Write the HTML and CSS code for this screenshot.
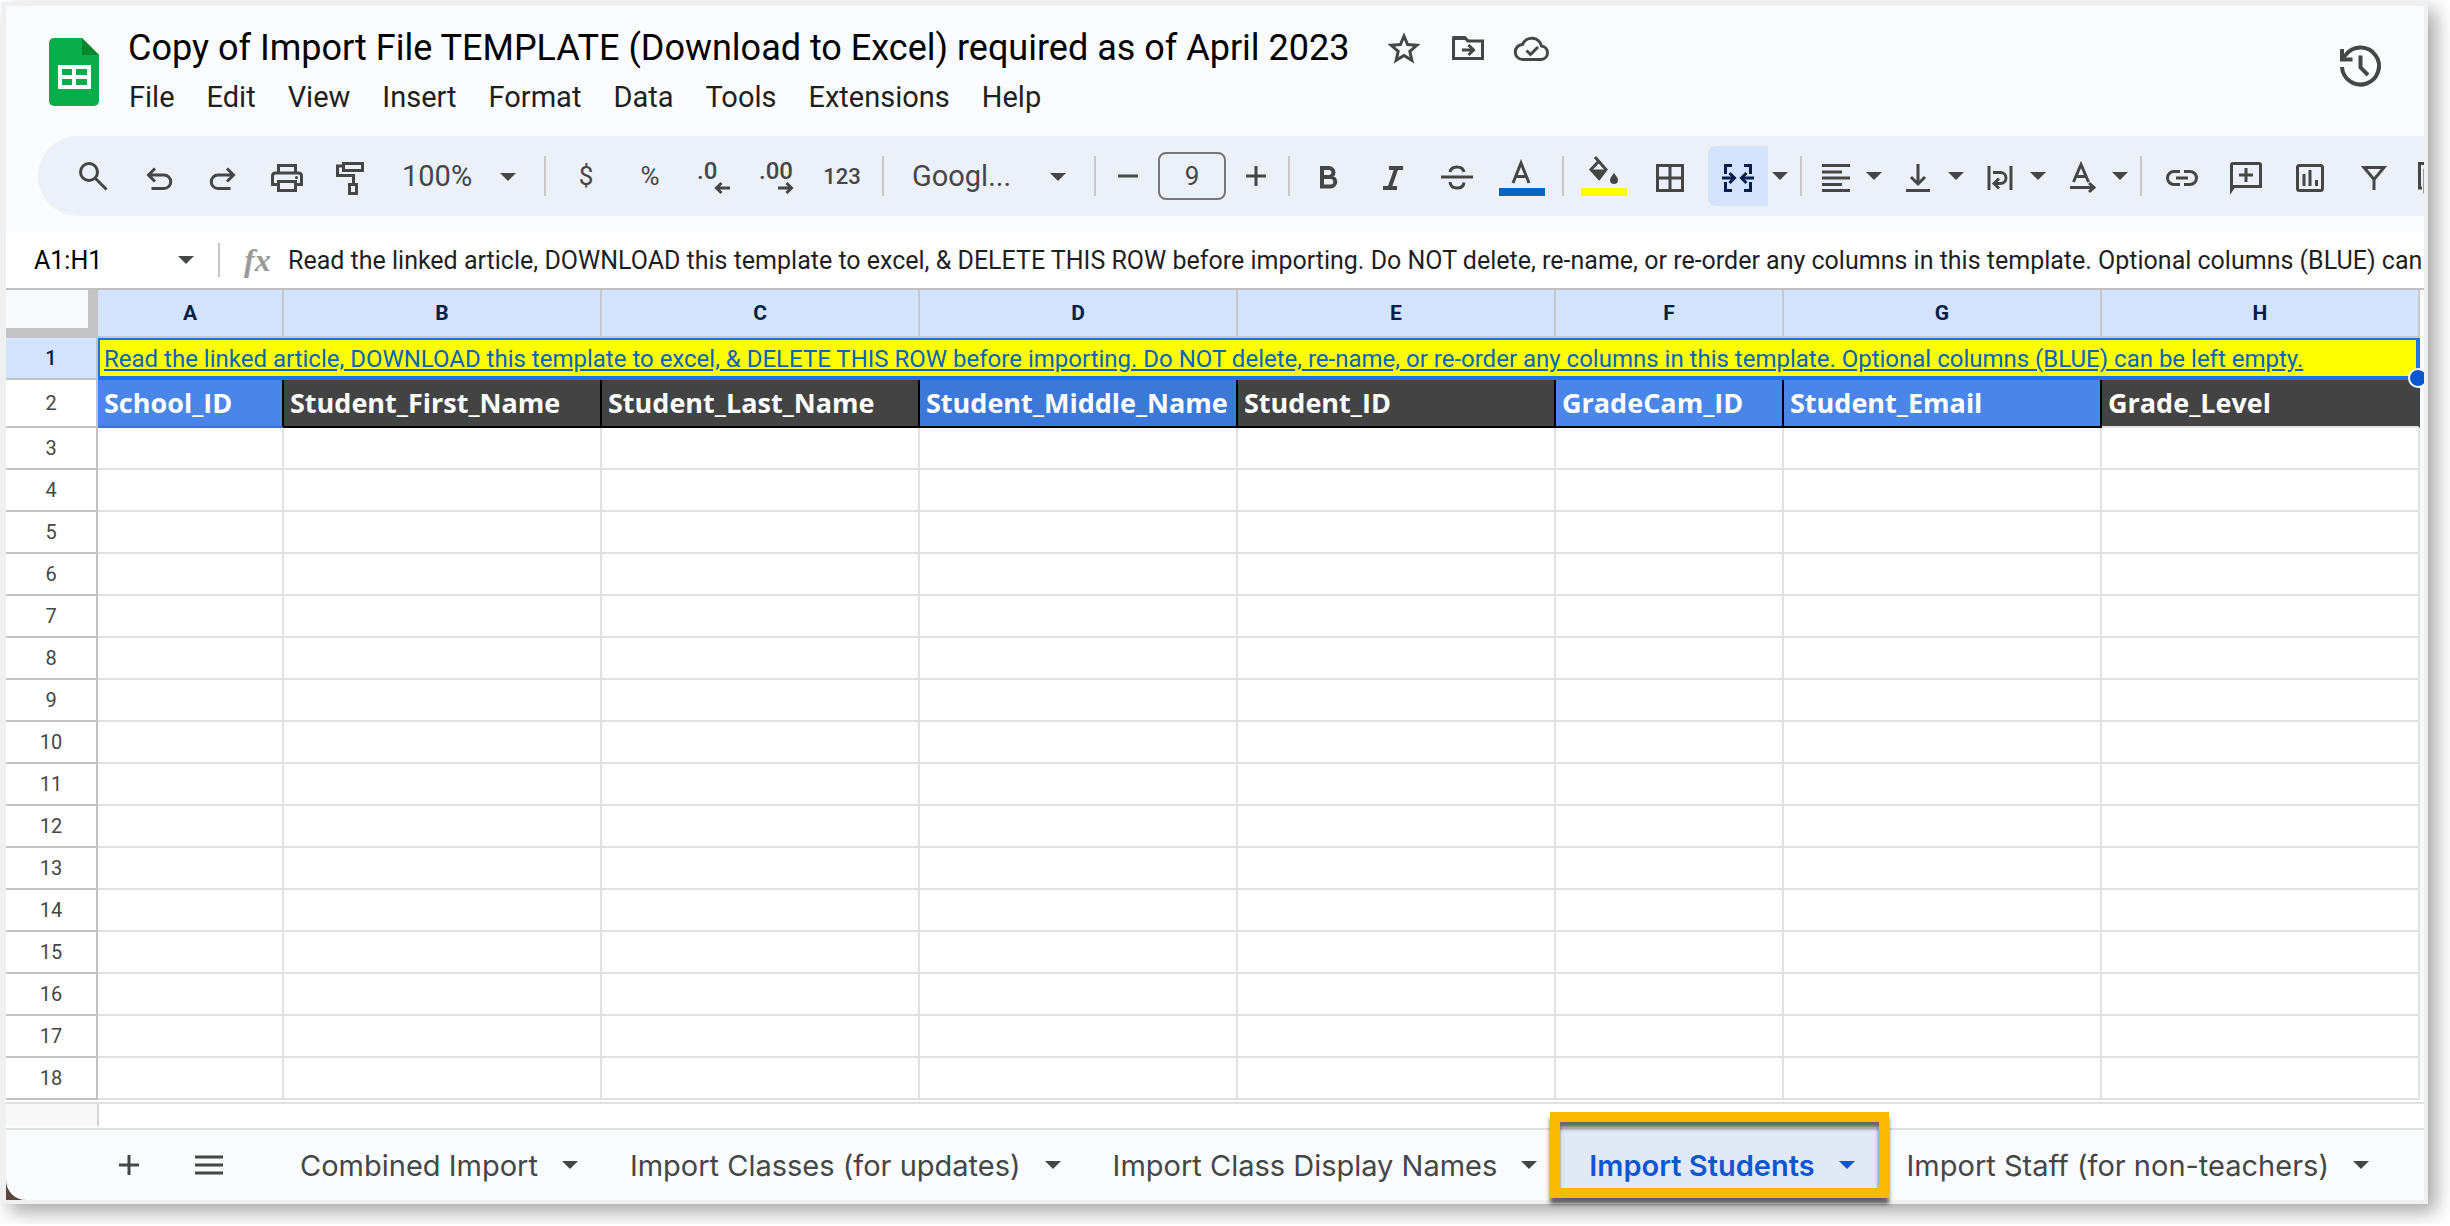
FILE: index.html
```html
<!DOCTYPE html>
<html lang="en">
<head>
  <meta charset="UTF-8">
  <meta name="viewport" content="width=device-width, initial-scale=1.0">
  <title>Copy of Import File TEMPLATE</title>
  <link rel="stylesheet" href="styles.css">
</head>
<body>

<div class="window">
  <header>
    <svg class="logo" viewBox="0 0 50 68">
      <path fill="#0bac4b" d="M5 0h28l17 17v46a5 5 0 0 1-5 5H5a5 5 0 0 1-5-5V5a5 5 0 0 1 5-5z"/>
      <path fill="#07852f" d="M33 0l17 17H33z"/>
      <path fill="#fff" fill-rule="evenodd" d="M9 27h33v24H9zM13 31v6h10v-6zM27 31v6h11v-6zM13 41v6h10v-6zM27 41v6h11v-6z"/>
    </svg>
    <div class="doc">
      <div class="title-row">
        <h1>Copy of Import File TEMPLATE (Download to Excel) required as of April 2023</h1>
        <button aria-label="Star"><svg viewBox="0 0 40 40"><path d="M20 8l3.600 8.500 9.200 0.800-7 6 2.100 9-7.900-4.800-7.900 4.800 2.100-9-7-6 9.200-0.800z"/></svg></button>
        <button aria-label="Move"><svg viewBox="0 0 40 40"><path d="M5.500 11v19.500h29V13H20l-3-3H5.500z"/><path class="solid" d="M5 8h12l4 4H5z"/><path d="M14 22h10M20.500 17l5 5-5 5"/></svg></button>
        <button aria-label="Document status"><svg viewBox="0 0 40 40"><path d="M11 31.500a7.500 7.500 0 0 1-.5-15A10 10 0 0 1 29.500 18a6.800 6.800 0 0 1 0 13.500z"/><path d="M14.500 22.500l4 4 7.500-7.500"/></svg></button>
      </div>
      <nav>
        <a href="#">File</a>
        <a href="#">Edit</a>
        <a href="#">View</a>
        <a href="#">Insert</a>
        <a href="#">Format</a>
        <a href="#">Data</a>
        <a href="#">Tools</a>
        <a href="#">Extensions</a>
        <a href="#">Help</a>
      </nav>
    </div>
    <button class="history" aria-label="Version history"><svg viewBox="0 0 48 48"><path d="M6 25a18.500 18.500 0 1 0 4-12.500L6 17"/><path d="M6 7v10.500h10.500"/><path d="M24.500 13.500v12l7.500 7.500"/></svg></button>
  </header>

  <div class="toolbar-wrap">
  <div class="toolbar">
    <button class="tool" aria-label="Search"><svg viewBox="0 0 40 40"><circle cx="15" cy="16" r="8.500"/><path d="M21 22l11.500 11.500"/></svg></button>
    <button class="tool" aria-label="Undo"><svg viewBox="0 0 40 40"><path d="M17 12.500l-6.500 6.500 6.500 6.500M11 19h15a6.500 6.500 0 0 1 0 13.500H13.500"/></svg></button>
    <button class="tool" aria-label="Redo"><svg viewBox="0 0 40 40"><path d="M25 12.500l6.500 6.500-6.500 6.500M31 19H16a6.500 6.500 0 0 0 0 13.500h12.500"/></svg></button>
    <button class="tool" aria-label="Print"><svg viewBox="0 0 40 40"><path d="M12.500 17V9.500h17V17M12.500 28.500h-6V20q0-3 3-3h23q3 0 3 3v8.500h-6M12.500 25.500h17v9h-17z"/><circle class="solid" cx="30.500" cy="21.500" r="1.500"/></svg></button>
    <button class="tool" aria-label="Paint format"><svg viewBox="0 0 40 40"><path d="M13.500 7.500h19v7h-19zM13.500 10h-6v9.500h16V28M19.500 28.500h7v9h-7z"/></svg></button>
    <label class="drop zoom"><select aria-label="Zoom"><option>100%</option></select></label>
    <span class="sep"></span>
    <button class="tool sign">$</button>
    <button class="tool sign">%</button>
    <button class="tool" aria-label="Decrease decimal places"><svg viewBox="0 0 40 40"><text x="3" y="23">.0</text><path d="M36 32H22.500M27.500 27l-5 5 5 5"/></svg></button>
    <button class="tool" aria-label="Increase decimal places"><svg viewBox="0 0 40 40"><text x="1" y="23">.00</text><path d="M20 32h13.500M28.500 27l5 5-5 5"/></svg></button>
    <button class="tool num">123</button>
    <span class="sep"></span>
    <label class="drop font"><select aria-label="Font"><option>Googl...</option></select></label>
    <span class="sep"></span>
    <button class="step" aria-label="Decrease font size"><svg viewBox="0 0 40 40"><path d="M10 20h20"/></svg></button>
    <input class="size" type="text" value="9" aria-label="Font size">
    <button class="step" aria-label="Increase font size"><svg viewBox="0 0 40 40"><path d="M10 20h20M20 10v20"/></svg></button>
    <span class="sep"></span>
    <button class="tool" aria-label="Bold"><svg viewBox="0 0 40 40"><path class="mid" d="M12 12h7a4.500 4.500 0 0 1 0 9h-7zM12 21h8.500a4.700 4.700 0 0 1 0 9.500H12z"/></svg></button>
    <button class="tool" aria-label="Italic"><svg viewBox="0 0 40 40"><path class="mid" d="M15 12h14M9 32h14M22.500 12l-7 20"/></svg></button>
    <button class="tool" aria-label="Strikethrough"><svg viewBox="0 0 40 40"><path d="M3 21h32M26 16q-1-5-7-5t-7 5M12 26q.5 6 7 6t7-5.500"/></svg></button>
    <button class="tool" aria-label="Text color"><svg class="colour" viewBox="0 0 48 40"><path d="M15 27l8-20 8 20M18 20.500h10"/><path class="bar-blue" d="M1 32h46v8H1z"/></svg></button>
    <span class="sep"></span>
    <button class="tool" aria-label="Fill color"><svg class="colour" viewBox="0 0 48 40"><path d="M15 1l11 12.500-7 9-8-9 8-8.500"/><path class="solid" d="M10 13.500h17l-7.500 11z"/><path class="solid" d="M34 17q4 5 4 7a4 4 0 0 1-8 0q0-2 4-7z"/><path class="bar-yellow" d="M1 32h46v8H1z"/></svg></button>
    <button class="tool wide" aria-label="Borders"><svg viewBox="0 0 40 40"><path d="M7.500 9.500h25v25h-25zM20 9v26M7 22h26"/></svg></button>
    <button class="merge" aria-label="Merge cells"><svg viewBox="0 0 40 40"><path d="M14 9.500H7.500V18M26 9.500h6.500V18M14 34.500H7.500V26M26 34.500h6.500V26M4 22h12M24 22h12"/><path d="M11.500 17l5 5-5 5M28.500 17l-5 5 5 5"/></svg></button>
    <button class="caret" aria-label="Select merge type"></button>
    <span class="sep"></span>
    <button class="half" aria-label="Horizontal align"><svg viewBox="0 0 40 40"><path d="M6 9.500h28M6 16h20M6 22h28M6 28.500h20M6 34.500h28"/></svg></button>
    <button class="caret" aria-label="More alignments"></button>
    <button class="half next" aria-label="Vertical align"><svg viewBox="0 0 40 40"><path d="M20 8v19M13 21l7 7 7-7M8 34.500h24"/></svg></button>
    <button class="caret" aria-label="More vertical alignments"></button>
    <button class="half next" aria-label="Text wrapping"><svg viewBox="0 0 40 40"><path d="M9 10v24M31 10v24M13 16.500h7.500a5.500 5.500 0 0 1 0 11H15M19 22.500l-5 5 5 5"/></svg></button>
    <button class="caret" aria-label="More wrapping"></button>
    <button class="half next" aria-label="Text rotation"><svg viewBox="0 0 40 40"><path d="M11.500 26L19 8.500 26.500 26M14.500 20.500h9M8 31.500h22M27 27l5 4.500-5 4.500"/></svg></button>
    <button class="caret" aria-label="More rotations"></button>
    <span class="sep"></span>
    <button class="tool" aria-label="Insert link"><svg viewBox="0 0 40 40"><path d="M18 15.500h-6a6.500 6.500 0 0 0 0 13h6M22 15.500h6a6.500 6.500 0 0 1 0 13h-6M14 22h12"/></svg></button>
    <button class="tool" aria-label="Insert comment"><svg viewBox="0 0 40 40"><path d="M5.500 34V9q0-1.500 1.500-1.500h26q1.500 0 1.500 1.500v21.500H8zM20 12v14M13 19h14"/></svg></button>
    <button class="tool" aria-label="Insert chart"><svg viewBox="0 0 40 40"><rect x="7.500" y="9.500" width="25" height="25" rx="2"/><path d="M14 18v12M20 14v16M26.500 24v6"/></svg></button>
    <button class="tool" aria-label="Create a filter"><svg viewBox="0 0 40 40"><path d="M10 11.500h20l-10 12zM20 22v12"/></svg></button>
    <button class="tool" aria-label="Filter views"><svg viewBox="0 0 40 40"><path d="M4 32h-2.500V7.500H26M7 36V14h26v22z"/></svg></button>
  </div>
  </div>

  <div class="formula">
    <input class="name-box" type="text" value="A1:H1" aria-label="Name box">
    <button class="caret" aria-label="Named ranges"></button>
    <span class="line"></span>
    <em>fx</em>
    <input class="content" type="text" aria-label="Formula" value="Read the linked article, DOWNLOAD this template to excel, &amp; DELETE THIS ROW before importing. Do NOT delete, re-name, or re-order any columns in this template. Optional columns (BLUE) can be left empty.">
  </div>

  <div class="grid">
    <table>
      <colgroup>
        <col class="c-head"><col class="c-a"><col class="c-wide"><col class="c-wide"><col class="c-wide"><col class="c-wide"><col class="c-f"><col class="c-wide"><col class="c-wide"><col>
      </colgroup>
      <thead>
        <tr><th class="corner"></th><th>A</th><th>B</th><th>C</th><th>D</th><th>E</th><th>F</th><th>G</th><th>H</th><td class="rest"></td></tr>
      </thead>
      <tbody>
        <tr class="first">
          <th>1</th>
          <td class="selected" colspan="8"><a href="#">Read the linked article, DOWNLOAD this template to excel, &amp; DELETE THIS ROW before importing. Do NOT delete, re-name, or re-order any columns in this template. Optional columns (BLUE) can be left empty.</a><span class="handle"></span></td>
          <td class="rest"></td>
        </tr>
        <tr class="fields">
          <th>2</th>
          <td class="blue start">School_ID</td>
          <td>Student_First_Name</td>
          <td>Student_Last_Name</td>
          <td class="blue deep">Student_Middle_Name</td>
          <td>Student_ID</td>
          <td class="blue">GradeCam_ID</td>
          <td class="blue">Student_Email</td>
          <td class="end">Grade_Level</td>
          <td class="rest"></td>
        </tr>
        <tr><th>3</th><td></td><td></td><td></td><td></td><td></td><td></td><td></td><td></td><td class="rest"></td></tr>
        <tr><th>4</th><td></td><td></td><td></td><td></td><td></td><td></td><td></td><td></td><td class="rest"></td></tr>
        <tr><th>5</th><td></td><td></td><td></td><td></td><td></td><td></td><td></td><td></td><td class="rest"></td></tr>
        <tr><th>6</th><td></td><td></td><td></td><td></td><td></td><td></td><td></td><td></td><td class="rest"></td></tr>
        <tr><th>7</th><td></td><td></td><td></td><td></td><td></td><td></td><td></td><td></td><td class="rest"></td></tr>
        <tr><th>8</th><td></td><td></td><td></td><td></td><td></td><td></td><td></td><td></td><td class="rest"></td></tr>
        <tr><th>9</th><td></td><td></td><td></td><td></td><td></td><td></td><td></td><td></td><td class="rest"></td></tr>
        <tr><th>10</th><td></td><td></td><td></td><td></td><td></td><td></td><td></td><td></td><td class="rest"></td></tr>
        <tr><th>11</th><td></td><td></td><td></td><td></td><td></td><td></td><td></td><td></td><td class="rest"></td></tr>
        <tr><th>12</th><td></td><td></td><td></td><td></td><td></td><td></td><td></td><td></td><td class="rest"></td></tr>
        <tr><th>13</th><td></td><td></td><td></td><td></td><td></td><td></td><td></td><td></td><td class="rest"></td></tr>
        <tr><th>14</th><td></td><td></td><td></td><td></td><td></td><td></td><td></td><td></td><td class="rest"></td></tr>
        <tr><th>15</th><td></td><td></td><td></td><td></td><td></td><td></td><td></td><td></td><td class="rest"></td></tr>
        <tr><th>16</th><td></td><td></td><td></td><td></td><td></td><td></td><td></td><td></td><td class="rest"></td></tr>
        <tr><th>17</th><td></td><td></td><td></td><td></td><td></td><td></td><td></td><td></td><td class="rest"></td></tr>
        <tr><th>18</th><td></td><td></td><td></td><td></td><td></td><td></td><td></td><td></td><td class="rest"></td></tr>
      </tbody>
    </table>
    <div class="scroll-track"><span></span></div>
  </div>

  <footer>
    <button class="sheet-tool" aria-label="Add sheet"><svg viewBox="0 0 40 40"><path d="M10 20h20M20 10v20"/></svg></button>
    <button class="sheet-tool" aria-label="All sheets"><svg viewBox="0 0 40 40"><path d="M6 12h28M6 20h28M6 28h28"/></svg></button>
    <div class="tabs">
      <button class="tab">Combined Import</button>
      <button class="tab">Import Classes (for updates)</button>
      <button class="tab">Import Class Display Names</button>
      <button class="tab active">Import Students<span class="highlight"></span></button>
      <button class="tab">Import Staff (for non-teachers)</button>
    </div>
  </footer>
</div>

</body>
</html>
```
FILE: styles.css
```css
* { margin: 0; padding: 0; box-sizing: border-box; }
body { background: #fff; color: #1f1f1f; font-family: Roboto, "Open Sans", sans-serif; overflow-x: hidden; }
button { background: none; border: none; font: inherit; color: #444746; cursor: pointer; display: flex; align-items: center; justify-content: center; }
input, select { font: inherit; color: inherit; background: none; border: none; outline: none; }
svg { width: 40px; height: 40px; fill: none; stroke: currentColor; stroke-width: 3; flex: none; }
svg .solid { fill: currentColor; stroke: none; }
svg .mid { stroke-width: 4; }
svg text { fill: currentColor; stroke: none; font-size: 24px; font-weight: 500; }
svg .bar-blue { fill: #0563c1; stroke: none; }
svg .bar-yellow { fill: #ff0; stroke: none; }
svg.colour { width: 48px; }

.window { margin: 2px 22px 20px 2px; border: 4px solid #f0f0f0; background: #5a463d; box-shadow: 8px 8px 18px rgba(0,0,0,0.35); }

/* title and menus */
header { display: flex; height: 130px; padding: 20px 40px 0 43px; background: #f9fbfd; }
.logo { width: 50px; height: 68px; margin: 12px 29px 0 0; stroke: none; }
.doc { flex: 1; }
.title-row { display: flex; align-items: center; height: 44px; }
.title-row button { margin-left: 24px; }
.title-row h1 { font-size: 36px; font-weight: 400; color: #000; white-space: nowrap; margin-right: 10px; }
nav { display: flex; gap: 32px; padding: 6px 0 0 1px; }
nav a { font-size: 29px; line-height: 42px; color: #1f1f1f; text-decoration: none; }
.history { align-self: flex-start; margin-top: 16px; }
.history svg { width: 48px; height: 48px; stroke-width: 4; }

/* toolbar */
.toolbar-wrap { padding: 0 0 16px 32px; background: #f9fbfd; }
.toolbar { display: flex; align-items: center; height: 80px; padding-left: 24px; background: #ecf0f9; border-radius: 40px 0 0 40px; overflow: hidden; color: #444746; }
.toolbar button { height: 60px; flex: none; }
.tool { width: 64px; }
.tool.wide { width: 68px; }
.half { width: 52px; }
.half.next { margin-left: 6px; }
.step { width: 48px; }
.sign { font-size: 26px; }
.num { font-size: 22px; font-weight: 500; }
.sep { width: 2px; height: 40px; margin: 0 8px; background: #c7c7c7; flex: none; }
.drop { position: relative; flex: none; }
.drop select { appearance: none; width: 100%; padding-left: 20px; font-size: 29px; }
.drop::after { content: ""; position: absolute; right: 20px; top: 14px; border: 8px solid transparent; border-top-color: #444746; border-bottom: none; }
.zoom { width: 154px; }
.font { width: 194px; }
.size { width: 68px; height: 48px; margin: 0 6px; border: 2px solid #747775; border-radius: 8px; font-size: 26px; text-align: center; flex: none; }
.merge { width: 60px; margin-left: 4px; background: #d3e3fd; border-radius: 8px 0 0 8px; }
.toolbar .merge { color: #041e49; }
.caret { width: 24px; flex: none; }
.caret::before { content: ""; border: 8px solid transparent; border-top-color: #444746; border-bottom: none; }

/* formula bar */
.formula { display: flex; align-items: center; height: 58px; padding-left: 28px; background: #fff; border-bottom: 2px solid #c0c0c0; overflow: hidden; }
.name-box { width: 140px; font-size: 25px; color: #000; }
.formula .line { width: 2px; height: 34px; margin: 0 20px; background: #c7c7c7; flex: none; }
.formula em { width: 48px; padding-left: 4px; font-family: "Liberation Serif", serif; font-size: 32px; line-height: 32px; font-weight: 700; color: #999; }
.formula .content { flex: 1; min-width: 0; font-size: 25px; }

/* grid */
.grid { background: #fff; overflow: hidden; }
table { width: 100%; table-layout: fixed; border-collapse: separate; border-spacing: 0; }
.c-head { width: 92px; }
.c-a { width: 186px; }
.c-wide { width: 318px; }
.c-f { width: 228px; }
th { height: 42px; font-size: 20px; font-weight: 400; color: #444746; background: #fff; border: solid #c0c3c2; border-width: 0 2px 2px 0; }
td { border: solid #e1e1e1; border-width: 0 2px 2px 0; white-space: nowrap; }
thead th { height: 48px; font-size: 21px; font-weight: 700; color: #041e49; background: #d3e3fd; border-color: #c7c7c7; }
thead .corner { background: #f8f9fa; border-color: #c4c4c4; border-width: 0 10px 10px 0; }
td.rest { border: none; background: #f8f9fa; }
.first th { background: #d3e3fd; color: #041e49; font-weight: 500; }
.selected { position: relative; padding: 2px 0 0 4px; background: #ff0; border: solid #1a73e8; border-width: 2px 4px 4px 2px; font-size: 24px; line-height: 32px; }
.selected a { color: #0563c1; }
.handle { position: absolute; right: -12px; bottom: -12px; width: 20px; height: 20px; border: 2px solid #fff; border-radius: 50%; background: #0b57d0; }
.fields th { height: 48px; }
.fields td { padding-left: 6px; font-family: "Open Sans", sans-serif; font-size: 27px; line-height: 36px; font-weight: 700; color: #fff; background: #434343; border-color: #000; overflow: hidden; }
.fields td.blue { background: #4a86e8; }
.fields td.deep { background: #3c78d8; }
.fields td.start { border-bottom-color: #3c6fd0; }
.fields td.end { border-right-color: #434343; border-bottom-color: #e1e1e1; }
.fields td.rest { background: #f8f9fa; }
.scroll-track { height: 28px; margin-top: 2px; border: solid #e1e1e1; border-width: 2px 0; }
.scroll-track span { display: block; width: 93px; height: 22px; border-right: 2px solid #d5d5d5; background: #f8f8f8; }

/* sheet tabs */
footer { display: flex; align-items: center; height: 70px; padding-left: 83px; background: #f9fbfd; border-radius: 0 0 0 20px; }
.sheet-tool { width: 80px; height: 60px; }
.tabs { display: flex; height: 100%; margin-left: 25px; }
.tab { position: relative; gap: 24px; padding: 0 26px; font-family: Inter, sans-serif; font-size: 29px; white-space: nowrap; }
.tab::after { content: ""; border: 8px solid transparent; border-top-color: currentColor; border-bottom: none; }
.tab.active { background: #e1e9f7; color: #0b57d0; font-weight: 600; }
.highlight { position: absolute; inset: -18px -8px 2px -13px; border: 10px solid #fbb900; box-shadow: 0 6px 4px rgba(0,0,0,0.6), inset 0 6px 4px rgba(0,0,0,0.6); }
```
